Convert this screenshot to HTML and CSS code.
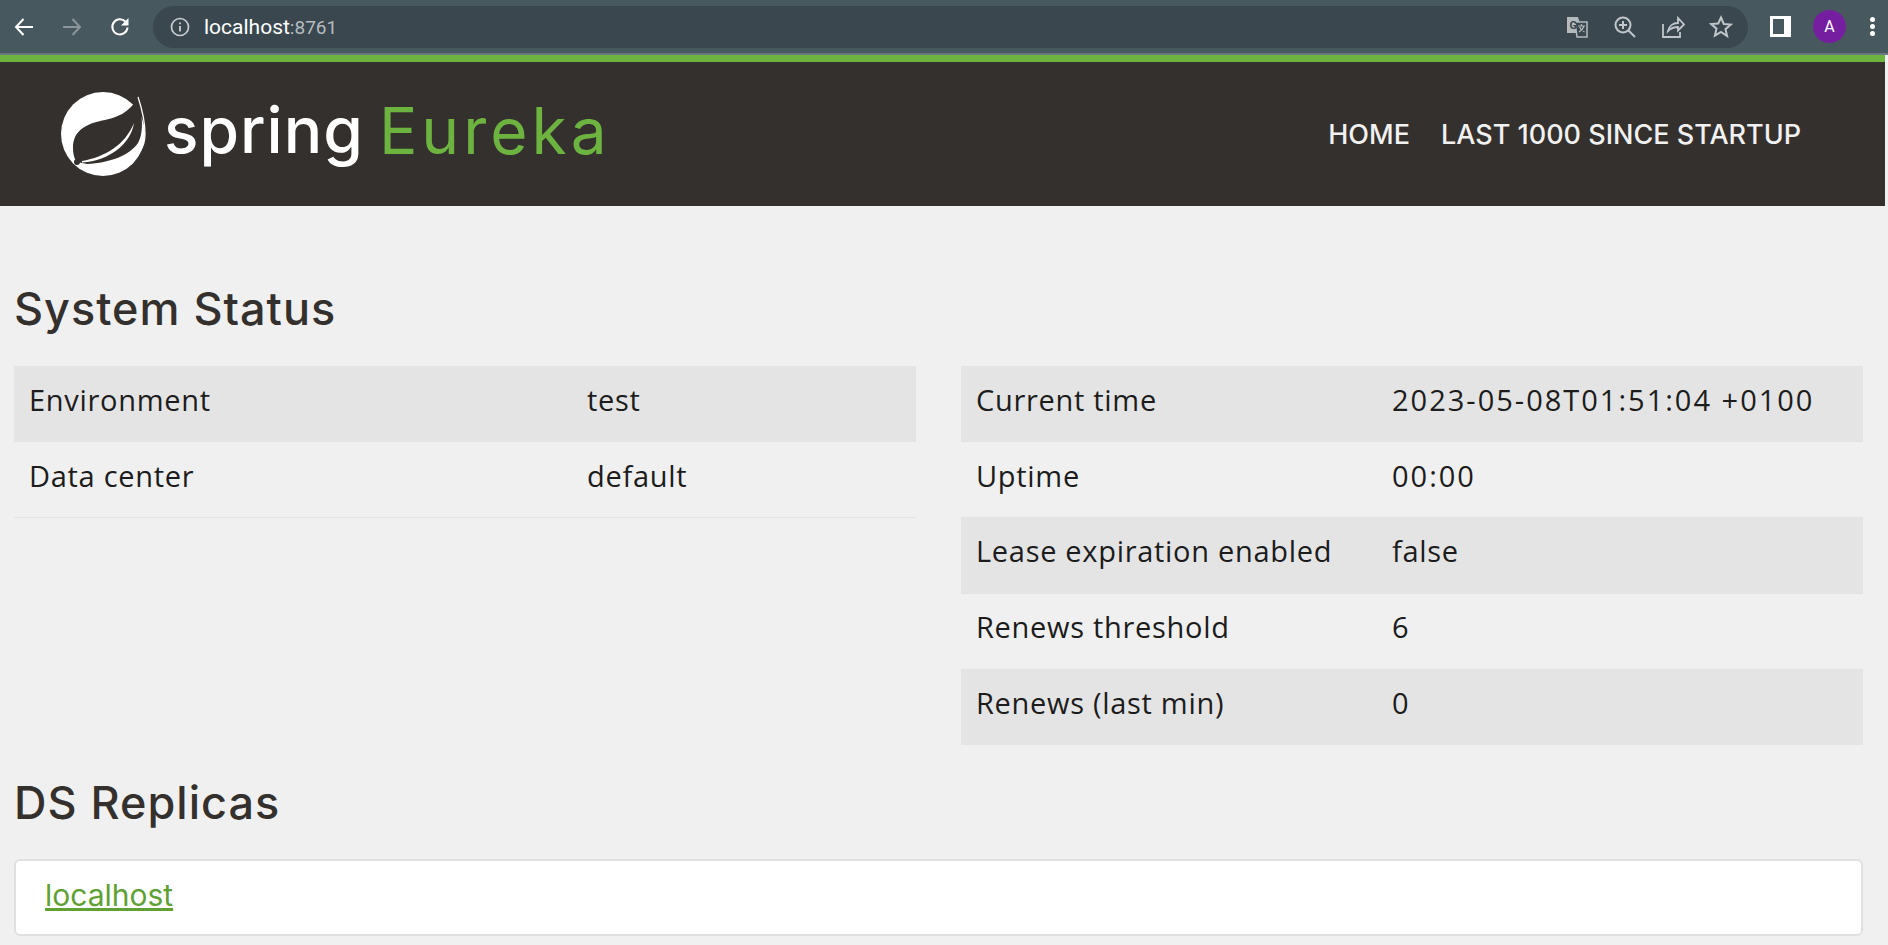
FILE: index.html
```html
<!doctype html>
<html>
<head>
<title>Eureka</title>
<link rel="stylesheet" href="styles.css">
</head>
<body>
	<div class="toolbar">
		<div class="navBtn">
			<svg width="24" height="24" viewBox="0 0 24 24"><path d="M21 12H4M11.500 4 4 12l7.500 8" fill="none" stroke="#fff" stroke-width="2"/></svg>
		</div>
		<div class="navBtn">
			<svg width="24" height="24" viewBox="0 0 24 24"><path d="M3 12h17M12.500 4l7.500 8-7.500 8" fill="none" stroke="#8b959b" stroke-width="2"/></svg>
		</div>
		<div class="navBtn">
			<svg width="24" height="24" viewBox="0 0 24 24"><path d="M19.500 12.500a7.600 7.600 0 1 1-2.200-6" fill="none" stroke="#fff" stroke-width="2"/><path d="M20.500 3v7.500H13z" fill="#fff"/></svg>
		</div>
		<div class="omnibox">
			<svg class="infoIcon" width="20" height="20" viewBox="0 0 20 20"><circle cx="10" cy="10" r="8.500" fill="none" stroke="#c8ced1" stroke-width="1.700"/><path d="M10 9v5.500M10 5.500v1.800" stroke="#c8ced1" stroke-width="1.800"/></svg>
			<div class="url">localhost<span class="port">:8761</span></div>
			<div class="omniIcons">
				<svg width="24" height="24" viewBox="0 0 24 24"><path d="M2 2h11l5 16H2z" fill="#b5babd"/><path d="M10 7h12v15H12z" fill="#3a474f" stroke="#b5babd" stroke-width="1.500"/><text x="4.500" y="14" class="gLetter">G</text><path d="M13 11h7M16.500 9v2M19 11c-1 3-3 5-5 6M14.500 12c1 2 3 4 5 5" fill="none" stroke="#b5babd" stroke-width="1.200"/></svg>
				<svg width="24" height="24" viewBox="0 0 24 24"><circle cx="10" cy="10" r="7.500" fill="none" stroke="#c0c6c9" stroke-width="2"/><path d="M10 6v8M6 10h8M15.500 15.500 22 22" stroke="#c0c6c9" stroke-width="2" fill="none"/></svg>
				<svg width="24" height="24" viewBox="0 0 24 24"><path d="M2 9v13h17v-5M7 16c1-5 5-8 10-8V3l6 6.500-6 6V12c-4 0-7 1-10 4z" fill="none" stroke="#c0c6c9" stroke-width="1.800"/></svg>
				<svg width="24" height="24" viewBox="0 0 24 24"><path d="M12 2.500l2.800 6.500 7 .6-5.300 4.600 1.600 6.900L12 17l-6.100 3.600 1.600-6.900-5.300-4.600 7-.6z" fill="none" stroke="#c0c6c9" stroke-width="2"/></svg>
			</div>
		</div>
		<div class="sideBtn"><div class="sideInner"></div></div>
		<div class="avatar">A</div>
		<div class="dots"><i></i><i></i><i></i></div>
	</div>
	<div class="chromeLine"></div>

	<div class="pageWrap">
		<div class="navbar">
			<div class="logo">
				<svg width="88" height="86" viewBox="0 0 88 86">
					<circle cx="43" cy="43" r="42" fill="#fff"/>
					<path d="M77 7C70 22 55 27 45 29 30 32 13 37 13 57 13 64 15 69 17 71L27 73C50 72 70 64 78 52 83 44 84 25 77 7z" fill="#34302d"/>
					<path d="M78 6C82 18 85 31 85 43 85 50 83 56 80 60" fill="none" stroke="#fff" stroke-width="1.300"/>
					<path d="M22 70C45 66 65 54 74 32 71 52 50 70 22 71.500z" fill="#fff"/>
					<circle cx="17" cy="71" r="3" fill="#34302d"/>
				</svg>
				<span class="logoSpring">spring</span>
				<span class="logoEureka">Eureka</span>
			</div>
			<div class="navLinks">
				<a href="#">HOME</a>
				<a href="#">LAST 1000 SINCE STARTUP</a>
			</div>
		</div>

		<div class="content">
			<h1>System Status</h1>
			<div class="statusRow">
				<table class="statusTable leftTable">
					<tr class="shaded"><td class="keyLeft">Environment</td><td>test</td></tr>
					<tr class="lined"><td class="keyLeft">Data center</td><td>default</td></tr>
				</table>
				<table class="statusTable rightTable">
					<tr class="shaded"><td class="keyRight">Current time</td><td class="numVal">2023-05-08T01:51:04 +0100</td></tr>
					<tr><td class="keyRight">Uptime</td><td class="numVal">00:00</td></tr>
					<tr class="shaded"><td class="keyRight">Lease expiration enabled</td><td>false</td></tr>
					<tr><td class="keyRight">Renews threshold</td><td class="numVal">6</td></tr>
					<tr class="shaded"><td class="keyRight">Renews (last min)</td><td class="numVal">0</td></tr>
				</table>
			</div>
			<h1 class="replicasTitle">DS Replicas</h1>
			<div class="replicaCard"><a href="#">localhost</a></div>
		</div>
	</div>
</body>
</html>
```
FILE: styles.css
```css
html {
	height: 100%;
}
body {
	margin: 0;
	height: 100%;
	overflow: hidden;
	background-color: #f0f0f0;
	font-family: "Open Sans", sans-serif;
}

/* browser bar */
.toolbar {
	display: flex;
	align-items: center;
	height: 53px;
	background-color: #47585f;
	padding-left: 12px;
}
.navBtn {
	width: 48px;
	height: 24px;
}
.omnibox {
	display: flex;
	align-items: center;
	width: 1595px;
	height: 42px;
	margin-left: -3px;
	border-radius: 21px;
	background-color: #3a474f;
}
.infoIcon {
	margin-left: 17px;
}
.url {
	margin-left: 14px;
	font-family: "Roboto", sans-serif;
	font-size: 21px;
	color: #fff;
}
.port {
	font-size: 19px;
	color: #b5bcc0;
}
.omniIcons {
	display: flex;
	gap: 24px;
	margin-left: auto;
	margin-right: 15px;
}
.gLetter {
	font-family: "Roboto", sans-serif;
	font-size: 11px;
	font-weight: bold;
	fill: #3a474f;
}
.sideBtn {
	width: 21px;
	height: 21px;
	margin-left: 22px;
	background-color: #fff;
}
.sideInner {
	width: 11px;
	height: 15px;
	margin: 3px 0 0 3px;
	background-color: #47585f;
}
.avatar {
	width: 33px;
	height: 33px;
	margin-left: 22px;
	border-radius: 50%;
	background-color: #761ea0;
	color: #fff;
	font-family: "Roboto", sans-serif;
	font-size: 16px;
	line-height: 33px;
	text-align: center;
}
.dots {
	display: flex;
	flex-direction: column;
	gap: 2px;
	margin-left: 24px;
}
.dots i {
	display: block;
	width: 5px;
	height: 5px;
	border-radius: 50%;
	background-color: #fff;
}
.chromeLine {
	height: 2px;
	background-color: #6a777e;
}

/* page */
.pageWrap {
	width: 1885px;
}
.navbar {
	display: flex;
	align-items: center;
	justify-content: space-between;
	height: 144px;
	border-top: 7px solid #6db33f;
	background-color: #34302d;
}
.logo {
	display: flex;
	align-items: center;
	margin-left: 60px;
}
.logoSpring {
	margin-left: 16px;
	padding-bottom: 10px;
	font-family: "Inter", sans-serif;
	font-size: 64px;
	font-weight: 500;
	letter-spacing: 1px;
	color: #fff;
}
.logoEureka {
	margin-left: 15px;
	padding-bottom: 8px;
	font-family: "Inter", sans-serif;
	font-size: 64px;
	letter-spacing: 4px;
	color: #6db33f;
}
.navLinks {
	display: flex;
	gap: 31px;
	margin-right: 84px;
}
.navLinks a {
	font-family: "Inter", sans-serif;
	font-size: 27px;
	font-weight: 500;
	color: #f1f1f1;
	text-decoration: none;
}
.content {
	padding: 0 22px 0 14px;
}
h1 {
	margin: 0;
	padding-top: 80px;
	font-family: "Inter", sans-serif;
	font-size: 45px;
	line-height: 46px;
	font-weight: 500;
	letter-spacing: 1px;
	color: #34302d;
}
.statusRow {
	display: flex;
	gap: 45px;
	align-items: flex-start;
	margin-top: 34px;
}
.statusTable {
	width: 902px;
	border-collapse: collapse;
	font-size: 29px;
	letter-spacing: .7px;
	color: #1c1c1c;
}
.statusTable td {
	height: 75.8px;
	padding: 0 15px 9px;
	box-sizing: border-box;
	white-space: nowrap;
}
.statusTable td.numVal {
	letter-spacing: 2px;
}
.shaded {
	background-color: #e4e4e4;
}
.statusTable tr {
	border-bottom: 1px solid #e3e3e3;
}
.keyLeft {
	width: 558px;
}
.keyRight {
	width: 416px;
}
.replicasTitle {
	padding-top: 35px;
}
.replicaCard {
	margin-top: 33px;
	height: 77px;
	box-sizing: border-box;
	padding: 0 29px;
	border: 2px solid #e0e0e0;
	border-radius: 6px;
	background-color: #fff;
	font-family: "Inter", sans-serif;
	font-size: 30px;
	line-height: 68px;
}
.replicaCard a {
	color: #5fa134;
	text-decoration-thickness: 3px;
}
```
